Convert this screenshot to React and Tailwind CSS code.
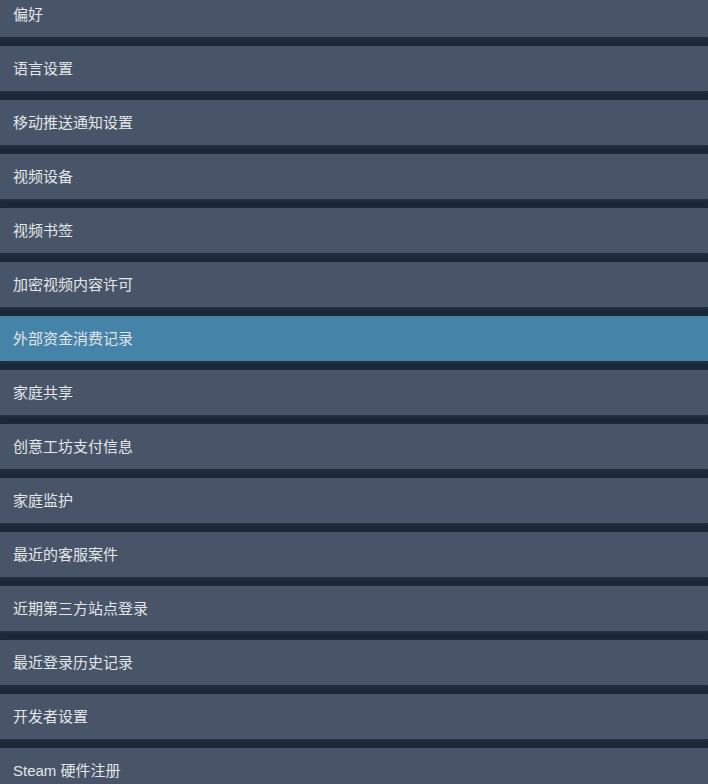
import React from "react";

const items = [
  "偏好",
  "语言设置",
  "移动推送通知设置",
  "视频设备",
  "视频书签",
  "加密视频内容许可",
  "外部资金消费记录",
  "家庭共享",
  "创意工坊支付信息",
  "家庭监护",
  "最近的客服案件",
  "近期第三方站点登录",
  "最近登录历史记录",
  "开发者设置",
  "Steam 硬件注册",
];

export default function App() {
  return (
    <div
      className="w-[708px] h-[784px] overflow-hidden bg-[#1b2838]"
      style={{ fontFamily: '"Liberation Sans", "Noto Sans CJK SC", sans-serif' }}
    >
      <div className="-mt-2 flex flex-col gap-[9px]">
        {items.map((t) => (
          <div
            key={t}
            className={
              "h-[45px] flex items-center pl-[13px] pt-[2px] text-[15px] text-[#e3e6e9] shadow-[0_2px_2px_rgba(40,52,70,0.9)] " +
              (t === "外部资金消费记录" ? "bg-[#4683a9]" : "bg-[#485568]")
            }
          >
            {t}
          </div>
        ))}
      </div>
    </div>
  );
}
